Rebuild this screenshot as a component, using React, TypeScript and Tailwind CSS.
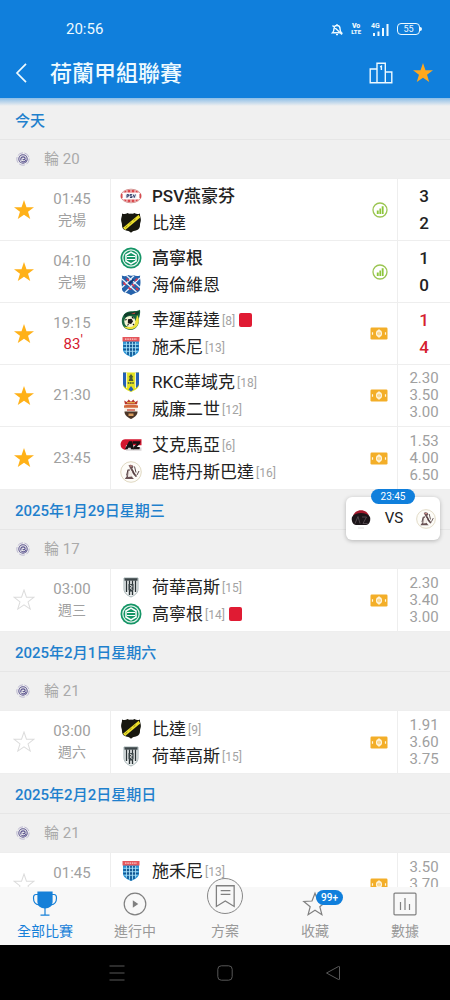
import React from 'react';

type ClubId =
  | 'psv' | 'nac' | 'groningen' | 'heerenveen' | 'fortuna' | 'zwolle'
  | 'rkc' | 'willem' | 'az' | 'sparta' | 'heracles' | 'goahead';

interface Team {
  club: ClubId;
  name: string;
  rank?: number;
  winner?: boolean;
  redCard?: boolean;
}

interface Match {
  time: string;
  note?: string;
  minute?: number;
  starred: boolean;
  teams: [Team, Team];
  badge: 'stats' | 'live';
  score?: [number, number];
  odds?: [string, string, string];
}

interface Group {
  date: string;
  round: number;
  matches: Match[];
}

const groups: Group[] = [
  {
    date: '今天',
    round: 20,
    matches: [
      {
        time: '01:45', note: '完場', starred: true, badge: 'stats', score: [3, 2],
        teams: [{ club: 'psv', name: 'PSV燕豪芬', winner: true }, { club: 'nac', name: '比達' }],
      },
      {
        time: '04:10', note: '完場', starred: true, badge: 'stats', score: [1, 0],
        teams: [{ club: 'groningen', name: '高寧根', winner: true }, { club: 'heerenveen', name: '海倫維恩' }],
      },
      {
        time: '19:15', minute: 83, starred: true, badge: 'live', score: [1, 4],
        teams: [{ club: 'fortuna', name: '幸運薛達', rank: 8, redCard: true }, { club: 'zwolle', name: '施禾尼', rank: 13 }],
      },
      {
        time: '21:30', starred: true, badge: 'live', odds: ['2.30', '3.50', '3.00'],
        teams: [{ club: 'rkc', name: 'RKC華域克', rank: 18 }, { club: 'willem', name: '威廉二世', rank: 12 }],
      },
      {
        time: '23:45', starred: true, badge: 'live', odds: ['1.53', '4.00', '6.50'],
        teams: [{ club: 'az', name: '艾克馬亞', rank: 6 }, { club: 'sparta', name: '鹿特丹斯巴達', rank: 16 }],
      },
    ],
  },
  {
    date: '2025年1月29日星期三',
    round: 17,
    matches: [
      {
        time: '03:00', note: '週三', starred: false, badge: 'live', odds: ['2.30', '3.40', '3.00'],
        teams: [{ club: 'heracles', name: '荷華高斯', rank: 15 }, { club: 'groningen', name: '高寧根', rank: 14, redCard: true }],
      },
    ],
  },
  {
    date: '2025年2月1日星期六',
    round: 21,
    matches: [
      {
        time: '03:00', note: '週六', starred: false, badge: 'live', odds: ['1.91', '3.60', '3.75'],
        teams: [{ club: 'nac', name: '比達', rank: 9 }, { club: 'heracles', name: '荷華高斯', rank: 15 }],
      },
    ],
  },
  {
    date: '2025年2月2日星期日',
    round: 21,
    matches: [
      {
        time: '01:45', note: '週日', starred: false, badge: 'live', odds: ['3.50', '3.70', '1.95'],
        teams: [{ club: 'zwolle', name: '施禾尼', rank: 13 }, { club: 'goahead', name: '前進之鷹', rank: 7 }],
      },
    ],
  },
];

// ── Club crests ──────────────────────────────────────────────────────────────

const crests: Record<ClubId, React.ReactNode> = {
  psv: (
    <>
      <ellipse cx="11" cy="11" rx="10.3" ry="6.8" fill="#fff" stroke="#d08a88" strokeWidth=".9" />
      <path d="M3 7.600C5 5.600 8 5 11 5s6 .6 8 2.600zM3 14.400c2 2 5 2.600 8 2.600s6-.6 8-2.600z" fill="#d8454a" />
      <path d="M7 5.500v2.300M11 5v2.500M15 5.500v2.300M7 14.200v2.300M11 14.400v2.600M15 14.200v2.300" stroke="#fff" strokeWidth=".9" />
      <path d="M1.800 8.800v4.400M20.200 8.800v4.400" stroke="#d8454a" strokeWidth="1.500" />
      <rect x="5.500" y="8.800" width="11" height="4.400" rx="1" fill="#e8eaf2" />
      <path d="M7 12.800V9.600h1.600v1.600H7M12 9.600h-2v1.400h2v1.500h-2M13.200 9.500l1.100 3 1.100-3" fill="none" stroke="#26325f" strokeWidth=".9" />
    </>
  ),
  nac: (
    <>
      <path d="M2 1.500c2 1 4 .7 5.500-.5 1 .8 2.200 1 3.500.5 1.300.5 2.500.3 3.500-.5 1.500 1.200 3.500 1.500 5.500.5-.3 2.300.9 4 .9 6.500 0 1.800-1 3-.9 5 .1 2.500-1 4.500-3.500 5.300-2 .6-4 .8-5.500 2.500-1.500-1.700-3.500-1.900-5.500-2.500C3 17.500 1.900 15.500 2 13c.1-2-.9-3.200-.9-5C1.100 5.500 2.300 3.800 2 1.500z" fill="#17170f" />
      <path d="M3 15.800L18.700 2.800l1.500 2.700L5.200 18z" fill="#ece02c" />
      <path d="M5.500 15.500l2-1.700M9.500 12l2-1.700M13.500 8.700l2-1.700" stroke="#8a8218" strokeWidth=".9" />
    </>
  ),
  groningen: (
    <>
      <circle cx="11" cy="11" r="10.500" fill="#159566" />
      <circle cx="11" cy="11" r="8.200" fill="none" stroke="#e6f5ee" strokeWidth="1.200" />
      <path d="M11 4.200l5.800 3.400v6.800L11 17.800l-5.800-3.400V7.600z" fill="#fff" />
      <path d="M11 5.900l4.300 2.500v5.200L11 16.100l-4.300-2.500V8.400z" fill="#159566" />
      <path d="M7 9.500h8M7 12.500h8" stroke="#fff" strokeWidth="1.200" />
    </>
  ),
  heerenveen: (
    <>
      <path d="M1.800 1.500c2.500 1 5 .8 6.700-.5 1.200 1 3.800 1.200 5 0 1.600 1.200 4.200 1.400 6.700.5-.8 2.500.5 4 .3 7 0 3-.8 3.500-.5 6 .2 3-3 4-4.500 4.500-1.800.6-3 1.200-4.500 2.200-1.500-1-2.700-1.600-4.500-2.200C4.500 18.500 1.800 17.500 2 14.500c.2-2.500-.5-3-.5-6 0-3 1.100-4.500.3-7z" fill="#2562ab" />
      <path d="M2 5l14.500 13M6.500 1.500L20 13.500M19.800 4L5 18.500M14 1.800L2 13.500" stroke="#e8f0fa" strokeWidth="1.300" />
      <path d="M7 5l1.500 1.500M12.500 10.500l1.500 1.500M3.800 9l1.400 1.400M15.500 6.500l1.400-1.400M9 14l1.400 1.200M16.500 14.500l1.200 1" stroke="#d8344d" strokeWidth="1.700" strokeLinecap="round" />
      <path d="M9 10l4.500-4.500" stroke="#0d3776" strokeWidth="1.800" />
    </>
  ),
  fortuna: (
    <>
      <path d="M20 .8c.5 3-.2 6-1 8.500C19.500 16 16 21 10.500 21 5.500 21 1.600 17.300 1.800 11.800 2 6 6 2.400 11 2.200c3 0 6 .2 9-1.400z" fill="#18663f" />
      <path d="M4 5.500C8 2 14 4 19.500 2c0 2-.8 3-2.500 4.200C12 4.700 8 5.500 5 9z" fill="#103d2a" />
      <path d="M17 6c3 4 2.500 10-2 13-4 2.400-9 1.300-11-1.200 5 .8 12-1.800 13-11.800z" fill="#eee23a" />
      <circle cx="9.800" cy="12.500" r="5.500" fill="#f6f4d6" />
      <path d="M8.500 10.800l2.600-.5 1.300 2-1.500 2-2.500-.6zM5 11l1.700-.5M12 8l1.500 1.500M7.500 16.500l1-1.500M13 15l1 1" fill="#161616" stroke="#161616" strokeWidth="1.100" />
      <path d="M11 4.500l4.500-1-1 1.500z" fill="#d94a3b" />
    </>
  ),
  zwolle: (
    <>
      <path d="M3 1.500h16v12c0 3.500-3.500 5.500-8 7.500-4.500-2-8-4-8-7.500z" fill="#2a93d4" />
      <path d="M8 6v13M11 6v14.500M14 6v13M3.300 10h15.400M3.300 13.500h15.400" stroke="#14558f" strokeWidth="1.500" />
      <path d="M6.500 6v11.500M9.500 6v13.500M12.500 6v13.500M15.500 6v11.500M3.500 8.300h15M3.500 11.700h15M4.500 15.300h13" stroke="#aee2f8" strokeWidth=".8" />
      <path d="M2.500 1h17v4.500h-17z" fill="#e5565b" />
      <path d="M5 3.200h12" stroke="#fad0d0" strokeWidth="1.200" strokeDasharray="1.500 .8" />
    </>
  ),
  rkc: (
    <>
      <path d="M3 1.500h16v12c0 4-3.500 5.500-8 7.500-4.500-2-8-3.500-8-7.500z" fill="#e3e21f" />
      <path d="M3 1.500h3v15.400C4 15.500 3 14.500 3 12.500zM16 1.500h3v11c0 2-1 3-3 4.400z" fill="#2560b5" />
      <path d="M6.600 2v15M15.400 2v15" stroke="#f6f6ea" strokeWidth=".9" />
      <path d="M11 3l-2.300 3 1.100.8L8.600 10h4.800l-1.200-3.200 1.100-.8z" fill="#4b5b34" />
      <path d="M7.800 12h6.400" stroke="#39543a" strokeWidth="1.700" strokeDasharray="1.600 .6" />
      <path d="M8.500 18.500L11 15l2.500 3.500L11 20.500z" fill="#2560b5" />
    </>
  ),
  willem: (
    <>
      <path d="M5 6.500l-.8-4 2.600 1.400L8.700 1.500 11 3.700l2.300-2.200 1.900 2.400 2.600-1.400-.8 4z" fill="#b8342c" />
      <path d="M7 4.700h8" stroke="#e6b84c" strokeWidth="1.200" />
      <path d="M4.500 6.500h13v7.500c0 3.500-3.500 5.500-6.500 7-3-1.500-6.500-3.500-6.500-7z" fill="#f7efe4" />
      <path d="M4 7.500c1-1 12.500-1 14 0v2.300H4z" fill="#d2683c" />
      <path d="M4.500 13.500h13c0 4-3.500 6-6.500 7.500-3-1.500-6.500-3.500-6.500-7.500z" fill="#4a3528" />
      <path d="M7 12h8" stroke="#c5402f" strokeWidth="1.300" />
      <path d="M8.500 15.500h5v2.500h-5z" fill="#d79b5d" />
    </>
  ),
  az: (
    <>
      <path d="M5 5.200h16.500v6H6L5.500 16C2.500 15.500.6 13.500.6 10.800S2.200 5.200 5 5.200z" fill="#d3162f" />
      <path d="M6 13.500h15.500v3.200H6z" fill="#d9d5d6" />
      <path d="M4.800 15.200L9 7.300h3.300l1.700 7.900h-3l-.3-1.500H8.300l-.8 1.500z" fill="#171214" />
      <path d="M13 7.300h7.500l-.4 2.300-3.300 3.300h3l-.3 2.300h-6.300l.4-2.300 3.200-3.100h-4z" fill="#171214" />
    </>
  ),
  sparta: (
    <>
      <circle cx="11" cy="11" r="10.300" fill="#fdfcf8" stroke="#d8cfb4" strokeWidth=".8" />
      <path d="M8.500 4.300c2-1.300 4.500-.5 5 1.400l-1.200 2 1.600 3.300 3.300 4.200-1.600.8-2.600-3M12.500 16.500l1.500 1.500H4.800l2.400-3.500L7.500 10l1.700-2.500" fill="#6a5355" />
      <path d="M8.500 9.500l3.200.5.3 5.500-4 .5z" fill="#f4eeea" />
      <path d="M8 8.500l-1.500 6M12.500 8.500l2 5M14.500 5.500l1.500 6M17 14l2-4" fill="none" stroke="#4a3638" strokeWidth=".9" />
      <path d="M9.500 5h2.800" stroke="#c88a86" strokeWidth="1.200" />
    </>
  ),
  heracles: (
    <>
      <path d="M4 2h14v11c0 4-3.500 6.500-7 8-3.500-1.500-7-4-7-8z" fill="#f1f4f4" stroke="#8ea0a2" strokeWidth=".8" />
      <path d="M4.500 2.200h13v2.500h-13z" fill="#3c4649" />
      <path d="M6.500 4.500v11.500M9.500 4.500v14.500M12.500 4.500v14.500M15.500 4.500v11.500" stroke="#2a3336" strokeWidth="1.400" />
      <path d="M8.500 8h5v6l-2.500 2-2.500-2z" fill="#3a4548" />
      <path d="M10 9l2.200 1.500-2 1.500 2 1.600" fill="none" stroke="#fff" strokeWidth=".9" />
    </>
  ),
  goahead: (
    <>
      <path d="M5 1h12v12l-6 8-6-8z" fill="#d8202f" />
      <path d="M6 0h10v2H6z" fill="#1c1817" />
      <path d="M7 7l4 3 4-3-4 9z" fill="#f3cf3a" />
    </>
  ),
};

const Crest: React.FC<{ club: ClubId; className?: string }> = ({ club, className = 'size-[22px]' }) => (
  <svg viewBox="0 0 22 22" className={`shrink-0 ${className}`} aria-hidden="true">
    {crests[club]}
  </svg>
);

// ── Icons ────────────────────────────────────────────────────────────────────

const STAR = 'M12 1.100L14.700 8.900 22.900 9 16.400 14 18.800 21.900 12 17.200 5.200 21.900 7.600 14 1.100 9 9.300 8.900z';

const Star: React.FC<{ className: string; filled?: boolean }> = ({ className, filled }) => (
  <svg viewBox="0 0 24 24" className={className} aria-hidden="true">
    <path d={STAR} fill={filled ? 'currentColor' : 'none'} stroke={filled ? 'none' : 'currentColor'} strokeWidth="1.100" />
  </svg>
);

const LeagueMark = () => (
  <svg viewBox="0 0 14 14" className="size-3.5" fill="none" stroke="#5d568f" aria-hidden="true">
    <circle cx="7" cy="7" r="6.200" strokeWidth=".8" stroke="#b0abc9" strokeDasharray="6 1.500" />
    <circle cx="7" cy="7" r="4.200" strokeWidth="1.100" />
    <path d="M5 8.500c-.8-2 .5-3.700 2.200-3.700 1.500 0 2.300 1.200 1.700 2.300-.5 1-2 .8-1.800-.2M5.500 9.200c1.500 1.300 4 .6 4.500-1.400" strokeWidth="1.200" />
  </svg>
);

const StatsBadge = () => (
  <svg viewBox="0 0 16 16" className="size-4" aria-hidden="true">
    <circle cx="8" cy="8" r="7" fill="none" stroke="#9bc552" strokeWidth="1.300" />
    <path d="M4.800 8.500h1.900V12H4.800zM7.400 6.500h1.600V12H7.400zM9.700 4.300h1.900V12H9.700z" fill="#8cc63a" />
  </svg>
);

const LiveBadge = () => (
  <svg viewBox="0 0 18 13" className="h-[13px] w-[18px]" aria-hidden="true">
    <rect x=".5" y=".5" width="17" height="12" rx="1.200" fill="#f3ae28" />
    <g fill="none" stroke="#fff6e0">
      <ellipse cx="9" cy="6.500" rx="2.300" ry="2.700" strokeWidth="1.500" />
      <path d="M9 2.300v8.400" strokeWidth="1.200" />
      <path d="M2.500 5.200v2.600M15.500 5.200v2.600" strokeWidth="1.200" />
    </g>
  </svg>
);

// ── Rows ─────────────────────────────────────────────────────────────────────

const TeamLine: React.FC<{ team: Team }> = ({ team }) => (
  <div className="flex h-[27px] items-center whitespace-nowrap">
    <Crest club={team.club} />
    <span className={`ml-2.5 pt-0.5 text-[17px] text-[#222] ${team.winner ? 'font-medium' : ''}`}>{team.name}</span>
    {team.rank && <span className="ml-0.5 pt-0.5 text-xs text-[#a3a3a3]">[{team.rank}]</span>}
    {team.redCard && <span className="ml-1 h-3.5 w-[13px] rounded-xs bg-[#e01b33]" />}
  </div>
);

const MatchRow: React.FC<{ match: Match }> = ({ match }) => (
  <li className="flex h-[62px] items-stretch border-b border-[#eee] last:border-b-0">
    <button
      className={`flex w-12 items-center justify-center ${match.starred ? 'text-[#ffb118]' : 'text-[#dcdcdc]'}`}
      aria-label={`收藏 ${match.teams[0].name}`}
    >
      <Star filled={match.starred} className="size-[22px]" />
    </button>

    <div className="mr-3.5 flex w-12 flex-col items-center justify-center leading-[21px] text-[#a0a0a0]">
      <span className="text-[15px] leading-[21px]">{match.time}</span>
      {match.note && <span className="text-sm leading-[21px]">{match.note}</span>}
      {match.minute && (
        <span className="relative text-[15px] leading-[21px] text-[#d5202f]">
          {match.minute}
          <sup className="absolute -top-1 left-full text-sm">'</sup>
        </span>
      )}
    </div>

    <div className="flex min-w-0 flex-1 flex-col justify-center border-l border-[#eee] pl-[9px]">
      <TeamLine team={match.teams[0]} />
      <TeamLine team={match.teams[1]} />
    </div>

    <div className="flex items-center pr-[9px]">
      {match.badge === 'stats' ? <StatsBadge /> : <LiveBadge />}
    </div>

    <div className="flex w-[53px] flex-col items-center justify-center border-l border-[#eee]">
      {match.score?.map((goals, i) => (
        <span
          key={i}
          className={`text-[17px] leading-[27px] font-medium ${match.minute ? 'text-[#d5202f]' : 'text-[#222]'}`}
        >
          {goals}
        </span>
      ))}
      {match.odds?.map((odd, i) => (
        <span key={i} className="text-[15px] leading-[17px] text-[#a0a0a0]">{odd}</span>
      ))}
    </div>
  </li>
);

const MatchGroup: React.FC<{ group: Group }> = ({ group }) => (
  <section>
    <h2 className="flex h-10 items-center border-b border-[#e6e6e6] px-[15px] pt-[3px] text-[15px] font-medium text-[#1f80cd]">
      {group.date}
    </h2>
    <div className="flex h-[38px] items-center gap-3.5 px-4 text-[#aaa]">
      <LeagueMark />
      <span className="text-[15px]">輪 {group.round}</span>
    </div>
    <ul className="border-y border-[#eee] bg-white">
      {group.matches.map((match, i) => (
        <MatchRow key={i} match={match} />
      ))}
    </ul>
  </section>
);

// ── Chrome ───────────────────────────────────────────────────────────────────

const StatusBar = () => (
  <div className="flex h-12 items-end justify-between pr-7 pb-2 pl-[66px]">
    <span className="text-[15px] leading-[22px]">20:56</span>
    <div className="flex h-[22px] items-center">
      <svg viewBox="0 0 12 13" className="mr-2 h-[13px] w-3" fill="none" stroke="currentColor" strokeWidth="1.400" aria-hidden="true">
        <path d="M1.500 9.800C3 8.500 3 7 3 5.600 3 3.800 4.300 2.500 6 2.500s3 1.300 3 3.100c0 1.400 0 2.900 1.500 4.200zM6 1v1.500M5 11.600h2M1.500 2.500l9.500 9" />
      </svg>
      <span className="mr-2.5 flex flex-col items-center text-[6px] leading-[6px] font-black">
        <span className="text-[7px]">Vo</span>
        <span>LTE</span>
      </span>
      <span className="relative mr-2 h-[13px] w-[18px]">
        <span className="absolute -top-px left-0 text-[7px] leading-[8px] font-bold">4G</span>
        <svg viewBox="0 0 18 13" className="h-[13px] w-[18px]" fill="currentColor" aria-hidden="true">
          <path d="M2 10h2v3H2zM6.500 8.500h2V13h-2zM11 5h2v8h-2zM15.500 1h2v12h-2z" />
        </svg>
      </span>
      <span className="flex h-3 w-[23px] items-center justify-center rounded-sm border border-current text-[9px] leading-none">
        55
      </span>
      <span className="h-1 w-0.5 rounded-r-sm bg-current" />
    </div>
  </div>
);

const Header = () => (
  <header className="relative z-10 shrink-0 bg-[#107fdc] text-[#eefaff]">
    <StatusBar />
    <div className="flex h-[50px] items-center pr-4 pl-3.5">
      <button aria-label="返回" className="flex w-9 items-center">
        <svg viewBox="0 0 14 20" className="h-5 w-3.5" fill="none" stroke="currentColor" strokeWidth="1.700" aria-hidden="true">
          <path d="M12 .8L3 10l9 9.200" />
        </svg>
      </button>
      <h1 className="flex-1 text-[22px] font-medium">荷蘭甲組聯賽</h1>
      <button aria-label="排名" className="mr-[19px]">
        <svg viewBox="0 0 24 22" className="h-[22px] w-6" fill="none" stroke="currentColor" strokeWidth="1.400" aria-hidden="true">
          <path d="M8 20.800V1.200h8.300v19.600M8 7H1.200v13.800h21.600V10h-6.500M12.400 8V4.200l-1.300.6" />
        </svg>
      </button>
      <button aria-label="收藏聯賽" className="text-[#ffa81c]">
        <Star filled className="size-[22px]" />
      </button>
    </div>
    <div className="absolute inset-x-0 top-full h-2 bg-gradient-to-b from-[#107fdc]/45 to-transparent" />
  </header>
);

const NextMatch = () => (
  <button className="absolute top-[399px] right-2.5 flex h-[43px] w-[94px] items-center justify-between rounded-md bg-white px-1 text-[#222] shadow-[0_1px_4px_rgba(0,0,0,0.25)]">
    <span className="absolute -top-2 left-1/2 flex h-[15px] w-11 -translate-x-1/2 items-center justify-center rounded-full bg-[#107fdc] text-[10px] text-white">
      23:45
    </span>
    <svg viewBox="0 0 22 22" className="size-[22px]" aria-hidden="true">
      <path d="M3 8c1-3.500 4-5.800 8-5.800S18 4.500 19 8z" fill="#a3182c" />
      <path d="M2 9c2-3 5-4 9-4s7 1 9 4c1 4-1 8-4 8H6C3 17 1 13 2 9z" fill="#1c1519" />
      <path d="M5 15.500L8 8.500l2 7M12 9h4.500L13 15.500h4.500" fill="none" stroke="#5d5258" strokeWidth=".8" />
      <path d="M8 20h6" stroke="#ddd" strokeWidth="1" />
    </svg>
    <span className="text-[15px]">VS</span>
    <Crest club="sparta" className="size-5" />
  </button>
);

const tabs = [
  {
    label: '全部比賽',
    icon: (
      <>
        <path d="M6 1h14v10c0 3.500-3 6-7 6s-7-2.500-7-6z" fill="currentColor" />
        <path d="M6 3.500H4C2.200 3.500 1.500 4.500 1.500 7c0 4 2 6.500 5.500 7M20 3.500h2c1.800 0 2.500 1 2.500 3.500 0 4-2 6.500-5.500 7M13 16v8M8.500 24.200h9" />
      </>
    ),
  },
  {
    label: '進行中',
    icon: (
      <>
        <circle cx="13" cy="13" r="10.800" />
        <path d="M10.800 9.300l5.500 3.700-5.500 3.700z" fill="currentColor" stroke="none" />
      </>
    ),
  },
  { label: '方案', raised: true, icon: <path d="M5 3.500h16.500v19.200l-8.250-5-8.250 5zM9 8h9M9 11.500h9" /> },
  { label: '收藏', badge: '99+', icon: <path d="M13 2.200l3 7.800 8.200.5-6.400 5.200 2.100 8L13 19.300l-6.900 4.400 2.100-8L1.800 10.500l8.200-.5z" /> },
  { label: '數據', icon: <path d="M3 2.200h20q1 0 1 1v19.600q0 1-1 1H3q-1 0-1-1V3.200q0-1 1-1zM8.500 11v8M13 7v12M17.500 13v6" /> },
];

const TabBar = () => (
  <nav className="relative z-10 grid shrink-0 grid-cols-5 grid-rows-[58px] bg-[#f8f8f8]">
    {tabs.map((tab, i) => (
      <button
        key={tab.label}
        className={`relative flex flex-col items-center justify-end pb-[3px] ${i === 0 ? 'text-[#1680d8]' : 'text-[#999]'}`}
      >
        <span
          className={`flex shrink-0 items-center justify-center ${
            tab.raised ? 'mb-1.5 size-9 rounded-full border border-[#888] bg-[#f8f8f8]' : 'mb-[3px] size-[26px]'
          } ${i === 0 ? 'text-[#1680d8]' : 'text-[#808080]'}`}
        >
          <svg
            viewBox="0 0 26 26"
            className={tab.raised ? 'size-7' : 'size-[26px]'}
            fill="none"
            stroke="currentColor"
            strokeWidth="1.200"
            aria-hidden="true"
          >
            {tab.icon}
          </svg>
        </span>
        <span className="text-sm leading-[22px]">{tab.label}</span>
        {tab.badge && (
          <span className="absolute top-[3px] left-1/2 ml-px flex h-[15px] w-[27px] items-center justify-center rounded-full bg-[#107fdc] text-[10px] font-medium text-white">
            {tab.badge}
          </span>
        )}
      </button>
    ))}
  </nav>
);

const SystemBar = () => (
  <div className="flex h-[55px] shrink-0 items-center justify-center gap-[92px] bg-black text-[#585858]">
    <svg viewBox="0 0 16 16" className="size-4" fill="none" stroke="currentColor" strokeWidth="1" aria-hidden="true">
      <path d="M.5 1h15M.5 8h15M.5 15h15" />
    </svg>
    <svg viewBox="0 0 16 16" className="size-4" fill="none" stroke="currentColor" strokeWidth="1" aria-hidden="true">
      <rect x=".8" y=".8" width="14.400" height="14.400" rx="3.500" />
    </svg>
    <svg viewBox="0 0 16 16" className="size-4" fill="none" stroke="currentColor" strokeWidth="1" strokeLinejoin="round" aria-hidden="true">
      <path d="M14.500 2v12q0 1-1 .5L1.500 8l12-6.500q1-.5 1 .5z" />
    </svg>
  </div>
);

const App: React.FC = () => (
  <div className="flex h-screen flex-col overflow-hidden bg-[#f0f0f0] font-['Roboto','Noto_Sans_CJK_TC',sans-serif]">
    <Header />
    <div className="relative flex min-h-0 flex-1 flex-col">
      <main className="min-h-0 flex-1 overflow-y-auto pt-0.5 [scrollbar-width:none]">
        {groups.map((group) => (
          <MatchGroup key={group.date} group={group} />
        ))}
      </main>
      <NextMatch />
    </div>
    <TabBar />
    <SystemBar />
  </div>
);

export default App;
